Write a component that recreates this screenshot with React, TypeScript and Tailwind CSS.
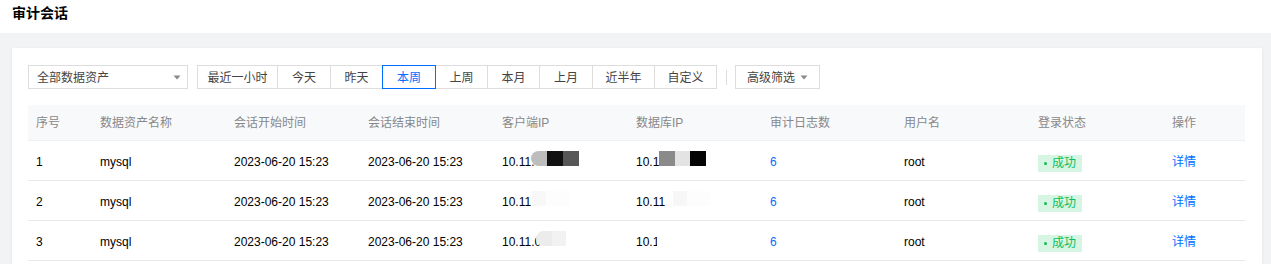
import React from 'react';

const font = { fontFamily: '"Liberation Sans", "Noto Sans CJK SC", sans-serif' };

const ranges: { label: string; w: string; active?: boolean }[] = [
  { label: '最近一小时', w: 'w-[81px]' },
  { label: '今天', w: 'w-[54px]' },
  { label: '昨天', w: 'w-[53px]' },
  { label: '本周', w: 'w-[54px]', active: true },
  { label: '上周', w: 'w-[53px]' },
  { label: '本月', w: 'w-[53px]' },
  { label: '上月', w: 'w-[54px]' },
  { label: '近半年', w: 'w-[63px]' },
  { label: '自定义', w: 'w-[63px]' },
];

const columns = [
  { title: '序号', w: 'w-[64px]' },
  { title: '数据资产名称', w: 'w-[134px]' },
  { title: '会话开始时间', w: 'w-[134px]' },
  { title: '会话结束时间', w: 'w-[134px]' },
  { title: '客户端IP', w: 'w-[134px]' },
  { title: '数据库IP', w: 'w-[134px]' },
  { title: '审计日志数', w: 'w-[134px]' },
  { title: '用户名', w: 'w-[134px]' },
  { title: '登录状态', w: 'w-[134px]' },
  { title: '操作', w: 'flex-1' },
];

function Caret() {
  return (
    <svg width="8" height="5" viewBox="0 0 8 5" className="shrink-0">
      <path d="M0.5 0.5 L7.5 0.5 L4 4.5 Z" fill="#888" />
    </svg>
  );
}

// mosaic blocks covering part of the ip address
function Mask({ blocks }: { blocks: { w: string; c: string; round?: boolean }[] }) {
  return (
    <span className="relative -top-[3px] flex h-[15px]">
      {blocks.map((b, i) => (
        <span key={i} className={`${b.w} ${b.c} h-full ${b.round ? 'rounded-l-full' : ''}`} />
      ))}
    </span>
  );
}

const rows = [
  {
    id: 1,
    client: (
      <div className="flex items-center">
        <span>10.11.</span>
        <span className="-ml-[3px]">
          <Mask
            blocks={[
              { w: 'w-[16px]', c: 'bg-[#bdbdbd]', round: true },
              { w: 'w-[16px]', c: 'bg-[#111111]' },
              { w: 'w-[16px]', c: 'bg-[#575757]' },
            ]}
          />
        </span>
      </div>
    ),
    db: (
      <div className="flex items-center">
        <span>10.1</span>
        <span className="ml-[0px]">
          <Mask
            blocks={[
              { w: 'w-[16px]', c: 'bg-[#8a8a8a]' },
              { w: 'w-[15px]', c: 'bg-[#e3e3e3]' },
              { w: 'w-[16px]', c: 'bg-[#050505]' },
            ]}
          />
        </span>
      </div>
    ),
  },
  {
    id: 2,
    client: (
      <div className="flex items-center">
        <span>10.11</span>
        <span className="ml-[1px]">
          <Mask
            blocks={[
              { w: 'w-[14px]', c: 'bg-[#f8f8f8]' },
              { w: 'w-[24px]', c: 'bg-[#fdfdfd]' },
            ]}
          />
        </span>
      </div>
    ),
    db: (
      <div className="flex items-center">
        <span>10.11</span>
        <span className="ml-[8px]">
          <Mask
            blocks={[
              { w: 'w-[14px]', c: 'bg-[#f7f7f7]' },
              { w: 'w-[24px]', c: 'bg-[#fdfdfd]' },
            ]}
          />
        </span>
      </div>
    ),
  },
  {
    id: 3,
    client: (
      <div className="flex items-center">
        <span>10.11.0</span>
        <span className="-ml-[5px]">
          <Mask
            blocks={[
              { w: 'w-[16px]', c: 'bg-[#ececec]', round: true },
              { w: 'w-[14px]', c: 'bg-[#f2f2f2]' },
            ]}
          />
        </span>
      </div>
    ),
    db: (
      <div className="flex items-center">
        <span>10.1</span>
        <span className="w-[3px] h-[12px] bg-white -ml-[2px]" />
      </div>
    ),
  },
];

export default function App() {
  return (
    <div className="min-h-[264px] bg-[#f2f3f5] text-[12px] text-black" style={font}>
      <div className="h-[33px] bg-white px-3 pt-[3px]">
        <h1 className="text-[14px] font-bold leading-[20px] text-black">审计会话</h1>
      </div>

      <div className="pl-3 pr-[9px] pt-[15px]">
        <div className="bg-white px-4 pt-[17px] h-[216px] overflow-hidden shadow-[0_1px_3px_rgba(0,0,0,0.08)]">
          <div className="flex items-center h-6">
            <div className="w-[160px] h-6 border border-[#dddddd] flex items-center justify-between pl-[8px] pr-[6px] pt-px">
              <span className="text-[#444]">全部数据资产</span>
              <Caret />
            </div>

            <div className="ml-[9px] flex h-6">
              {ranges.map((r, i) => (
                <div
                  key={r.label}
                  className={`${r.w} h-6 pt-px flex items-center justify-center border ${
                    r.active
                      ? 'border-[#006eff] text-[#006eff] relative z-10'
                      : 'border-[#dddddd] text-[#444]'
                  } ${i > 0 ? '-ml-px' : ''}`}
                >
                  {r.label}
                </div>
              ))}
            </div>

            <div className="ml-[9px] w-px h-[15px] bg-[#dddddd]" />

            <div className="ml-[8px] w-[85px] h-6 pt-px border border-[#dddddd] flex items-center justify-center gap-[5px] text-[#444]">
              <span>高级筛选</span>
              <Caret />
            </div>
          </div>

          <div className="mt-4 w-[1217px]">
            <div className="flex h-[36px] pt-px items-center bg-[#f8f9fb] border-b border-[#eeeff2] text-[#888]">
              {columns.map((c) => (
                <div key={c.title} className={`${c.w} px-2`}>
                  {c.title}
                </div>
              ))}
            </div>

            {rows.map((r) => (
              <div key={r.id} className="flex h-[40px] pt-[2px] items-center border-b border-[#e8e9ec]">
                <div className="w-[64px] px-2">{r.id}</div>
                <div className="w-[134px] px-2">mysql</div>
                <div className="w-[134px] px-2">2023-06-20 15:23</div>
                <div className="w-[134px] px-2">2023-06-20 15:23</div>
                <div className="w-[134px] px-2">{r.client}</div>
                <div className="w-[134px] px-2">{r.db}</div>
                <div className="w-[134px] px-2 text-[#006eff]">6</div>
                <div className="w-[134px] px-2">root</div>
                <div className="w-[134px] px-2">
                  <span className="inline-flex h-[17px] items-center gap-[5px] bg-[#d6f5e3] px-[6px] text-[#0abf5b]">
                    <span className="w-[3px] h-[3px] rounded-full bg-[#0abf5b]" />
                    成功
                  </span>
                </div>
                <div className="flex-1 px-2 text-[#006eff]">详情</div>
              </div>
            ))}
          </div>
        </div>
      </div>
    </div>
  );
}
